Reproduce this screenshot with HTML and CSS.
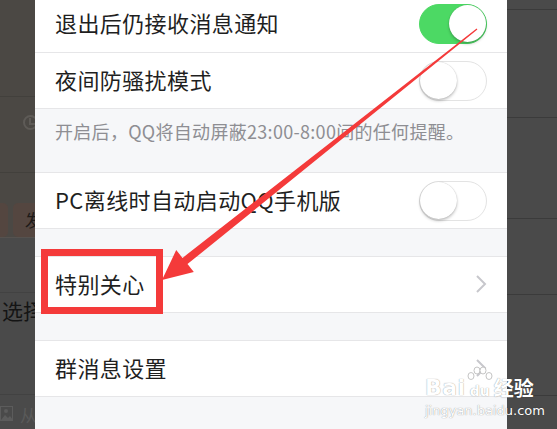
FILE: index.html
```html
<!DOCTYPE html>
<html lang="zh-CN">
<head>
<meta charset="utf-8">
<link rel="stylesheet" href="styles.css">
</head>
<body>
<div class="screen">
  <div class="side-left">
    <div class="sl sl-a"></div>
    <div class="sl sl-b"><span class="clock"></span></div>
    <div class="sl sl-c"><span class="pill pill1"></span><span class="pill pill2">发</span></div>
    <div class="sl sl-d"></div>
    <div class="sl sl-e"><span class="sel">选择</span></div>
    <div class="sl sl-f">
      <svg class="pic" width="14" height="16" viewBox="0 0 14 16"><rect x="0.5" y="0.5" width="12" height="14" fill="none" stroke="#5c5c5c"/><circle cx="6" cy="5" r="2" fill="#5c5c5c"/><path d="M1 14 L5 9 L8 12 L10 10 L13 14 Z" fill="#5c5c5c"/></svg>
      <span class="from">从</span>
    </div>
  </div>

  <div class="panel">
    <div class="cell first">
      <span class="label">退出后仍接收消息通知</span>
      <span class="switch on"><span class="knob"></span></span>
    </div>
    <div class="cell">
      <span class="label">夜间防骚扰模式</span>
      <span class="switch"><span class="knob"></span></span>
    </div>
    <div class="hint">开启后，QQ将自动屏蔽23:00-8:00间的任何提醒。</div>
    <div class="cell">
      <span class="label">PC离线时自动启动QQ手机版</span>
      <span class="switch"><span class="knob"></span></span>
    </div>
    <div class="gap"></div>
    <div class="cell">
      <span class="label">特别关心</span>
      <svg class="chev" width="12" height="20" viewBox="0 0 12 20"><polyline points="2,2 10,10 2,18" fill="none" stroke="#c7c7cc" stroke-width="2"/></svg>
    </div>
    <div class="gap"></div>
    <div class="cell">
      <span class="label">群消息设置</span>
      <svg class="chev" width="12" height="20" viewBox="0 0 12 20"><polyline points="2,2 10,10 2,18" fill="none" stroke="#c7c7cc" stroke-width="2"/></svg>
    </div>
    <div class="tail"></div>
  </div>

  <div class="side-right">
    <div class="sr sr1"></div>
    <div class="sr sr2"></div>
    <div class="sr sr3"></div>
    <div class="sr sr4"></div>
    <div class="sr sr5"></div>
    <div class="sr sr6"></div>
  </div>

  <div class="redbox"></div>

  <svg class="arrow" width="557" height="429" viewBox="0 0 557 429">
    <polygon fill="#f43a3a" points="476.6,28.6 477.4,29.4 187.5,264.1 193.8,271.9 162,280 176.2,250.1 182.5,257.9"/>
  </svg>

  <div class="watermark">
    <div class="wm-top">
      <span class="wm-bai">Bai</span>
      <span class="wm-paw">
        <svg width="28" height="17" viewBox="0 0 28 17"><g fill="#fff" stroke="#bdbdbd" stroke-width="0.9"><ellipse cx="5" cy="10" rx="3" ry="3.5"/><ellipse cx="11" cy="4.5" rx="3" ry="3.5"/><ellipse cx="17" cy="4.5" rx="3" ry="3.5"/><ellipse cx="23" cy="10" rx="3" ry="3.5"/></g></svg>
        <span class="wm-du">du</span>
      </span>
      <span class="wm-jy">经验</span>
    </div>
    <div class="wm-url">jingyan.baidu.com</div>
  </div>
</div>
</body>
</html>
```

FILE: styles.css
```css
* { box-sizing: border-box; }
html, body { margin: 0; padding: 0; }
body {
  width: 557px;
  height: 429px;
  overflow: hidden;
  font-family: "Noto Sans CJK SC", "Noto Sans", sans-serif;
  background: #4a4a4a;
}
.screen {
  position: relative;
  display: flex;
  width: 557px;
  height: 429px;
  overflow: hidden;
}

/* left dimmed page */
.side-left {
  width: 35px;
  flex: none;
  display: flex;
  flex-direction: column;
  overflow: hidden;
  background: #4a4a4a;
}
.sl { position: relative; flex: none; overflow: hidden; }
.sl-a { height: 97px; background: #4b4844; border-bottom: 1px solid #42403c; }
.sl-b { height: 76px; background: #4b4844; border-bottom: 1px solid #42403c; }
.sl-c { height: 65px; background: #4b4844; border-bottom: 1px solid #56524f; display: flex; align-items: flex-start; padding-top: 30px; gap: 5px; }
.sl-d { height: 55px; background: #4a4a4a; border-bottom: 1px solid #424242; }
.sl-e { height: 102px; background: #4a4a4a; border-bottom: 1px solid #424242; padding-top: 4px; }
.sl-f { flex: 1; background: #4a4a4a; display: flex; align-items: center; gap: 6px; padding-top: 4px; }
.clock {
  position: absolute;
  left: 23px;
  top: 18px;
  width: 15px;
  height: 15px;
  border: 2px solid #5e5b57;
  border-radius: 50%;
}
.clock::after {
  content: "";
  position: absolute;
  left: 4px;
  top: 1px;
  width: 4px;
  height: 5px;
  border-left: 2px solid #5e5b57;
  border-bottom: 2px solid #5e5b57;
}
.pill {
  display: block;
  height: 34px;
  border-radius: 5px;
  background: #544640;
  flex: none;
}
.pill1 { width: 16px; margin-left: -8px; }
.pill2 {
  width: 40px;
  font-size: 17px;
  line-height: 34px;
  color: #1e1a18;
  padding-left: 12px;
  white-space: nowrap;
}
.sel {
  display: block;
  font-size: 21px;
  line-height: 26px;
  color: #141414;
  padding-left: 2px;
  white-space: nowrap;
}
.pic { flex: none; }
.from { font-size: 17px; color: #5a5a5a; white-space: nowrap; }

/* panel */
.panel {
  width: 472px;
  flex: none;
  background: #f6f7f9;
  display: flex;
  flex-direction: column;
}
.cell {
  height: 56px;
  flex: none;
  background: #fff;
  border-bottom: 1px solid #e6e6e8;
  display: flex;
  align-items: center;
  justify-content: space-between;
  padding: 0 20px;
}
.cell.first { height: 58px; margin-top: -5px; }
.label {
  font-size: 22px;
  letter-spacing: 0.4px;
  color: #1f1f1f;
  line-height: 28px;
  margin-top: -3px;
}
.hint {
  height: 64px;
  flex: none;
  border-bottom: 1px solid #e6e6e8;
  padding: 10px 20px 0;
  font-size: 18px;
  line-height: 24px;
  color: #8e8e93;
  letter-spacing: 0.3px;
  white-space: nowrap;
}
.gap { height: 28px; flex: none; border-bottom: 1px solid #e6e6e8; }
.tail { flex: 1; }

.switch {
  position: relative;
  width: 68px;
  height: 40px;
  border-radius: 20px;
  background: #fff;
  border: 1.5px solid #e3e3e3;
  flex: none;
}
.switch .knob {
  position: absolute;
  left: 0;
  top: 0;
  width: 37px;
  height: 37px;
  border-radius: 50%;
  background: #fff;
  box-shadow: 0 2px 3px rgba(0,0,0,0.22), 0 0 1px rgba(0,0,0,0.25);
}
.switch.on {
  background: #4cd964;
  border-color: #4cd964;
}
.switch.on .knob { left: auto; right: 0; }
.chev { flex: none; margin-top: -2px; }

/* right dimmed strip */
.side-right {
  width: 50px;
  flex: none;
  display: flex;
  flex-direction: column;
  background: #4a4a4a;
}
.sr { flex: none; border-bottom: 1px solid #3b3b3b; }
.sr1 { height: 10px; }
.sr2 { height: 108px; }
.sr3 { height: 101px; }
.sr4 { height: 76px; }
.sr5 { height: 101px; }
.sr6 { flex: 1; border-bottom: none; }

/* annotations */
.redbox {
  position: absolute;
  left: 41px;
  top: 249px;
  width: 122px;
  height: 65px;
  border: 7px solid #f43a3a;
}
.arrow { position: absolute; left: 0; top: 0; }

.watermark {
  position: absolute;
  left: 425px;
  top: 362px;
  width: 115px;
  color: #fff;
  font-family: "DejaVu Sans", sans-serif;
}
.wm-top { display: flex; align-items: flex-end; height: 37px; }
.wm-bai {
  font-size: 22px;
  font-weight: bold;
  line-height: 22px;
  letter-spacing: 0.5px;
  text-shadow: 0 0 1px rgba(0,0,0,0.5);
}
.wm-paw { display: flex; flex-direction: column; align-items: center; width: 28px; }
.wm-du {
  font-size: 14px;
  font-weight: bold;
  line-height: 16px;
  text-shadow: 0 0 1px rgba(0,0,0,0.5);
}
.wm-jy {
  font-family: "Noto Sans CJK SC", sans-serif;
  font-size: 20px;
  line-height: 22px;
  font-weight: bold;
  text-shadow: 0 0 1px rgba(0,0,0,0.5);
}
.wm-url {
  font-size: 13px;
  line-height: 18px;
  margin-top: 3px;
  text-shadow: 0 0 1px rgba(0,0,0,0.5);
}
```
